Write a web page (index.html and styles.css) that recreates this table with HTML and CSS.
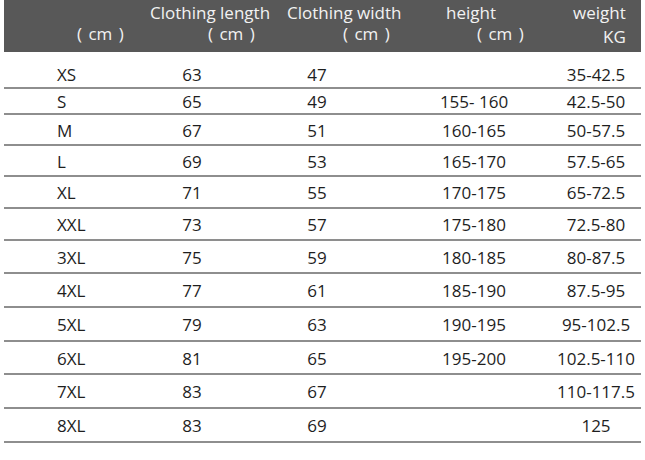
FILE: index.html
```html
<!DOCTYPE html>
<html lang="en">
<head>
<meta charset="utf-8">
<title>Size chart</title>
<link rel="stylesheet" href="styles.css">
</head>
<body>
<div class="chart">
  <div class="head">
    <div class="hc hc1"><div class="l2">( cm )</div></div>
    <div class="hc hc2"><div class="l1">Clothing length</div><div class="l2">( cm )</div></div>
    <div class="hc hc3"><div class="l1">Clothing width</div><div class="l2">( cm )</div></div>
    <div class="hc hc4"><div class="l1">height</div><div class="l2">( cm )</div></div>
    <div class="hc hc5"><div class="l1">weight</div><div class="l2 kg">KG</div></div>
  </div>
  <div class="rows">
    <div class="row"><div class="c c1">XS</div><div class="c">63</div><div class="c">47</div><div class="c"></div><div class="c c5">35-42.5</div></div>
    <div class="row"><div class="c c1">S</div><div class="c">65</div><div class="c">49</div><div class="c">155- 160</div><div class="c c5">42.5-50</div></div>
    <div class="row"><div class="c c1">M</div><div class="c">67</div><div class="c">51</div><div class="c">160-165</div><div class="c c5">50-57.5</div></div>
    <div class="row"><div class="c c1">L</div><div class="c">69</div><div class="c">53</div><div class="c">165-170</div><div class="c c5">57.5-65</div></div>
    <div class="row"><div class="c c1">XL</div><div class="c">71</div><div class="c">55</div><div class="c">170-175</div><div class="c c5">65-72.5</div></div>
    <div class="row"><div class="c c1">XXL</div><div class="c">73</div><div class="c">57</div><div class="c">175-180</div><div class="c c5">72.5-80</div></div>
    <div class="row"><div class="c c1">3XL</div><div class="c">75</div><div class="c">59</div><div class="c">180-185</div><div class="c c5">80-87.5</div></div>
    <div class="row"><div class="c c1">4XL</div><div class="c">77</div><div class="c">61</div><div class="c">185-190</div><div class="c c5">87.5-95</div></div>
    <div class="row"><div class="c c1">5XL</div><div class="c">79</div><div class="c">63</div><div class="c">190-195</div><div class="c c5">95-102.5</div></div>
    <div class="row"><div class="c c1">6XL</div><div class="c">81</div><div class="c">65</div><div class="c">195-200</div><div class="c c5">102.5-110</div></div>
    <div class="row"><div class="c c1">7XL</div><div class="c">83</div><div class="c">67</div><div class="c"></div><div class="c c5">110-117.5</div></div>
    <div class="row"><div class="c c1">8XL</div><div class="c">83</div><div class="c">69</div><div class="c"></div><div class="c c5">125</div></div>
  </div>
</div>
</body>
</html>
```
FILE: styles.css
```css
html, body {
  margin: 0;
  padding: 0;
  background: #ffffff;
}
body {
  font-family: "Open Sans", "Noto Sans", sans-serif;
  color: #1e1e1e;
}
.chart {
  width: 637px;
  margin-left: 4px;
}
.head {
  display: grid;
  grid-template-columns: 126px 124px 126px 188px 73px;
  height: 52px;
  background: #585858;
  color: #f2f2f2;
  font-size: 17px;
  line-height: 21px;
  box-sizing: border-box;
  padding-top: 2px;
}
.hc {
  white-space: nowrap;
}
.l2 {
  word-spacing: 2px;
}
.hc1 .l2 { padding-top: 21px; padding-left: 73px; }
.hc2 .l1 { padding-left: 20px; }
.hc2 .l2 { padding-left: 78px; }
.hc3 .l1 { padding-left: 33px; }
.hc3 .l2 { padding-left: 89px; }
.hc4 .l1 { padding-left: 66px; }
.hc4 .l2 { padding-left: 97px; }
.hc5 .l1 { padding-left: 5px; }
.hc5 .kg { padding-left: 35px; padding-top: 3px; word-spacing: 0; }

.row {
  display: grid;
  grid-template-columns: 126px 124px 126px 188px 73px;
  box-sizing: border-box;
  border-bottom: 2px solid #8e8e8e;
  padding-top: 2px;
  font-size: 17px;
  line-height: 20px;
}
.c {
  display: flex;
  align-items: center;
  justify-content: center;
  white-space: nowrap;
}
.c1 {
  justify-content: flex-start;
  padding-left: 53px;
}
.c5 {
  padding-right: 17px;
}
.row:nth-child(1) { height: 37px; padding-top: 10px; }
.row:nth-child(2) { height: 26px; }
.row:nth-child(3), .row:nth-child(4) { height: 31px; }
.row:nth-child(5), .row:nth-child(6) { height: 32px; }
.row:nth-child(7) { height: 33px; }
.row:nth-child(8), .row:nth-child(9) { height: 34px; }
.row:nth-child(10) { height: 33px; }
.row:nth-child(11), .row:nth-child(12) { height: 34px; }
```
